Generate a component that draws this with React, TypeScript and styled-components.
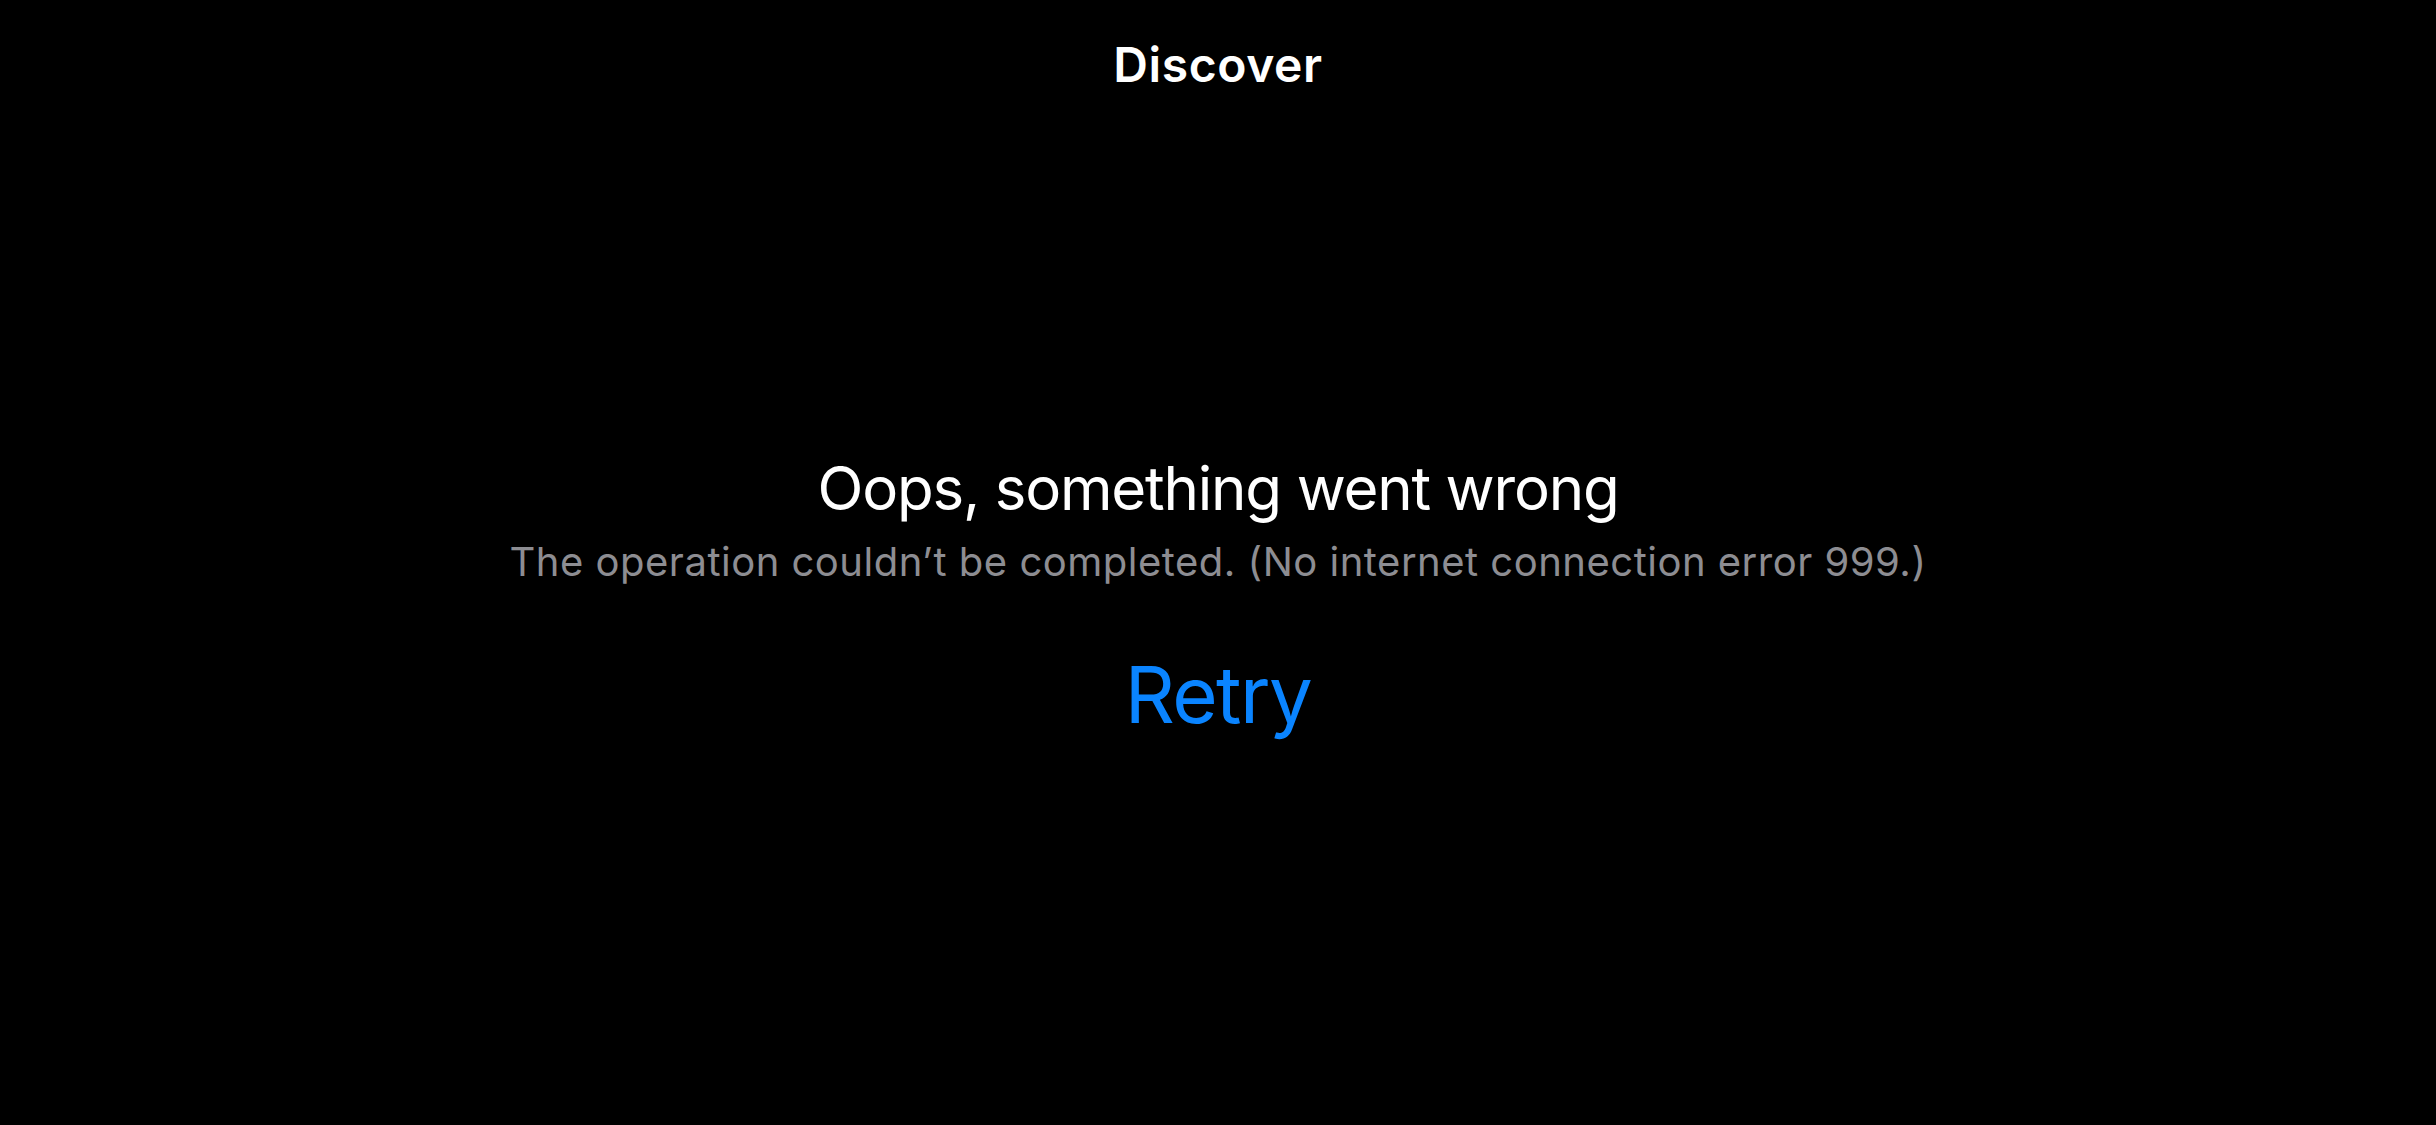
import React from "react";
import styled, { createGlobalStyle } from "styled-components";

const Global = createGlobalStyle`
  html, body { margin: 0; padding: 0; background: #000; }
  body { font-family: Inter, "Noto Sans", "Liberation Sans", sans-serif; -webkit-font-smoothing: antialiased; }
`;

const Page = styled.div`
  min-height: 100vh;
  background: #000;
  display: flex;
  flex-direction: column;
`;

const Header = styled.header`
  padding-top: 36px;
  display: flex;
  justify-content: center;
`;

const NavTitle = styled.h1`
  margin: 0;
  font-size: 48px;
  line-height: 58px;
  font-weight: 600;
  letter-spacing: 0.6px;
  color: #fff;
`;

const Content = styled.main`
  padding-top: 358px;
  display: flex;
  flex-direction: column;
  align-items: center;
`;

const Title = styled.h2`
  margin: 0;
  font-size: 60px;
  line-height: 72px;
  font-weight: 400;
  letter-spacing: -1.2px;
  color: #fff;
`;

const Message = styled.p`
  margin: 14px 0 0;
  font-size: 40px;
  line-height: 48px;
  font-weight: 400;
  letter-spacing: 0.5px;
  color: #8d8d92;
`;

const RetryButton = styled.button`
  margin-top: 62px;
  padding: 0;
  border: none;
  background: none;
  font-family: inherit;
  font-size: 78px;
  line-height: 94px;
  font-weight: 400;
  letter-spacing: -1.6px;
  color: #0a84ff;
  cursor: pointer;
`;

export default function App() {
  return (
    <Page>
      <Global />
      <Header>
        <NavTitle>Discover</NavTitle>
      </Header>
      <Content>
        <Title>Oops, something went wrong</Title>
        <Message>The operation couldn’t be completed. (No internet connection error 999.)</Message>
        <RetryButton>Retry</RetryButton>
      </Content>
    </Page>
  );
}
